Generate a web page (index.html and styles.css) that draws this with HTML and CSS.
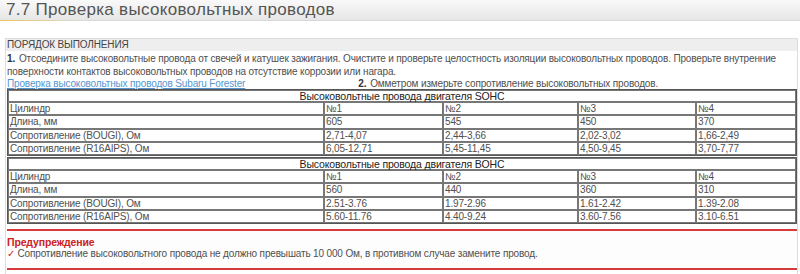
FILE: index.html
```html
<!DOCTYPE html>
<html lang="ru">
<head>
<meta charset="utf-8">
<link rel="stylesheet" href="styles.css">
</head>
<body>
<header class="title-bar">
  <h1 class="title">7.7 Проверка высоковольтных проводов</h1>
</header>
<section class="panel">
  <div class="panel-head">ПОРЯДОК ВЫПОЛНЕНИЯ</div>
  <div class="panel-body">
    <p class="step"><b class="num">1.</b> Отсоедините высоковольтные провода от свечей и катушек зажигания. Очистите и проверьте целостность изоляции высоковольтных проводов. Проверьте внутренние поверхности контактов высоковольтных проводов на отсутствие коррозии или нагара.</p>
    <div class="step-row">
      <a class="link" href="#">Проверка высоковольтных проводов Subaru Forester</a>
      <span class="step2"><b class="num">2.</b> Омметром измерьте сопротивление высоковольтных проводов.</span>
    </div>
    <table class="data">
      <colgroup><col class="c1"><col class="c2"><col class="c3"><col class="c4"><col class="c5"></colgroup>
      <tr><th colspan="5">Высоковольтные провода двигателя SOHC</th></tr>
      <tr><td>Цилиндр</td><td>№1</td><td>№2</td><td>№3</td><td>№4</td></tr>
      <tr><td>Длина, мм</td><td>605</td><td>545</td><td>450</td><td>370</td></tr>
      <tr><td>Сопротивление (BOUGI), Ом</td><td>2,71-4,07</td><td>2,44-3,66</td><td>2,02-3,02</td><td>1,66-2,49</td></tr>
      <tr><td>Сопротивление (R16AIPS), Ом</td><td>6,05-12,71</td><td>5,45-11,45</td><td>4,50-9,45</td><td>3,70-7,77</td></tr>
    </table>
    <table class="data">
      <colgroup><col class="c1"><col class="c2"><col class="c3"><col class="c4"><col class="c5"></colgroup>
      <tr><th colspan="5">Высоковольтные провода двигателя BOHC</th></tr>
      <tr><td>Цилиндр</td><td>№1</td><td>№2</td><td>№3</td><td>№4</td></tr>
      <tr><td>Длина, мм</td><td>560</td><td>440</td><td>360</td><td>310</td></tr>
      <tr><td>Сопротивление (BOUGI), Ом</td><td>2.51-3.76</td><td>1.97-2.96</td><td>1.61-2.42</td><td>1.39-2.08</td></tr>
      <tr><td>Сопротивление (R16AIPS), Ом</td><td>5.60-11.76</td><td>4.40-9.24</td><td>3.60-7.56</td><td>3.10-6.51</td></tr>
    </table>
    <div class="warning">
      <div class="warning-title">Предупреждение</div>
      <div class="warning-text"><span class="check">✓</span> Сопротивление высоковольтного провода не должно превышать 10 000 Ом, в противном случае замените провод.</div>
    </div>
  </div>
</section>
</body>
</html>
```
FILE: styles.css
```css
html, body {
  margin: 0;
  padding: 0;
  background: #ffffff;
  font-family: "Liberation Sans", Arial, sans-serif;
  font-size: 10px;
  letter-spacing: -0.15px;
  color: #4f4f4f;
}

.title-bar {
  height: 20px;
  background: linear-gradient(#f9f9f9, #e6e6e6);
  border-bottom: 1px solid #dadada;
  position: relative;
}

.title-bar::after {
  content: "";
  position: absolute;
  left: 0;
  bottom: -1px;
  width: 80px;
  height: 1px;
  background: linear-gradient(to right, #e9c35a, rgba(233, 195, 90, 0));
}

.title {
  margin: 0;
  padding-left: 6px;
  font-weight: normal;
  font-size: 17px;
  line-height: 20px;
  color: #555555;
  letter-spacing: 0.3px;
}

.panel {
  margin: 17px 2px 0 5px;
  border: 1px solid #dddddd;
  border-bottom: none;
  background: #f3f3f3;
}

.panel-head {
  height: 12px;
  line-height: 12px;
  padding-left: 1px;
  color: #444444;
  background: #eeeeee;
}

.panel-body {
  background: #ffffff;
  padding: 1px 0 6px 1px;
  border-bottom: 1px solid #f0f0f0;
}

.step {
  margin: 0;
  line-height: 13px;
}

.num {
  color: #333333;
  letter-spacing: 0;
  margin-right: 1px;
}

.step-row {
  display: flex;
  line-height: 11px;
}

.link {
  color: #5596cf;
  text-decoration: underline;
}

.step2 {
  flex: 1;
  text-align: center;
  padding-right: 26px;
}

.data {
  width: 790px;
  table-layout: fixed;
  border-collapse: separate;
  border-spacing: 0;
  border: 1px solid #555555;
  margin-bottom: 1px;
}

.c1 { width: 316px; }
.c2 { width: 119px; }
.c3 { width: 135px; }
.c4 { width: 118px; }
.c5 { width: auto; }

.data th {
  font-weight: normal;
  font-size: 10.5px;
  color: #222222;
  text-align: center;
  line-height: 10px;
  padding: 0;
  border: 1px solid #777777;
}

.data td {
  padding: 0 0 0 1px;
  line-height: 11.3px;
  border: 1px solid #777777;
  white-space: nowrap;
  overflow: hidden;
}

.warning {
  margin-top: 5px;
  border-top: 2px solid #d63a3a;
  border-bottom: 2px solid #d63a3a;
  background: #fdfdfd;
  padding: 5px 0 8px 0;
  line-height: 12px;
}

.warning-title {
  color: #cc2222;
  font-weight: bold;
  font-size: 10.5px;
}

.check {
  color: #cc2222;
}
```
